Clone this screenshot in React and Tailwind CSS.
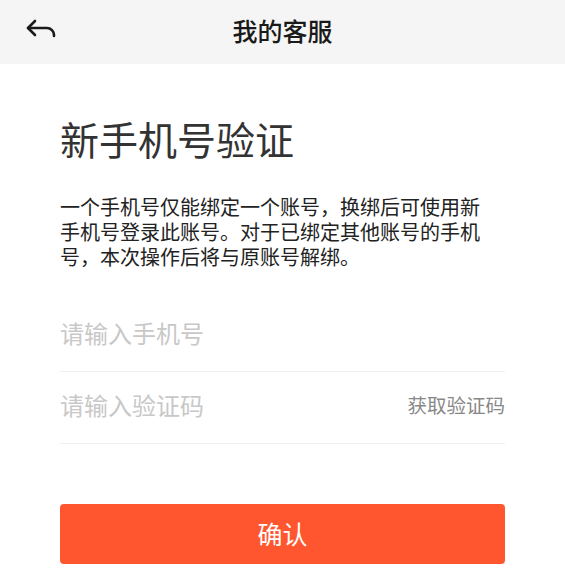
import React from "react";

const BackArrow = () => (
    <svg width="32" height="20" viewBox="0 0 32 20" fill="none" stroke="#1a1a1a" strokeWidth="2.6" strokeLinecap="round" strokeLinejoin="round">
        <path d="M9 2 L2 9 L9 16" />
        <path d="M2 9 H21 a7 7 0 0 1 7 7 V17" />
    </svg>
);

const App = () => {
    return (
        <div
            className="min-h-screen bg-white"
            style={{ fontFamily: '"Noto Sans CJK SC", "Noto Sans", sans-serif' }}
        >
            {/* header */}
            <div className="relative h-[64px] bg-[#f5f5f5] flex items-center justify-center">
                <button className="absolute left-[26px] top-[19px]">
                    <BackArrow />
                </button>
                <h1 className="-mt-[4px] text-[25px] font-medium text-[#1a1a1a] leading-none">我的客服</h1>
            </div>

            <div className="px-[60px]">
                <h2 className="mt-[55px] text-[39px] leading-none text-[#333333] font-normal">新手机号验证</h2>

                <p className="mt-[36px] w-[432px] text-[20px] leading-[25px] text-[#222222]">
                    一个手机号仅能绑定一个账号，换绑后可使用新手机号登录此账号。对于已绑定其他账号的手机号，本次操作后将与原账号解绑。
                </p>

                <div className="mt-[31px]">
                    <div className="h-[72px] pb-[6px] flex items-center border-b border-[#f0f0f0]">
                        <input
                            className="flex-1 outline-none text-[24px] text-[#333] placeholder:text-[#c8c8c8] bg-transparent"
                            placeholder="请输入手机号"
                        />
                    </div>
                    <div className="h-[72px] pb-[6px] flex items-center border-b border-[#f0f0f0]">
                        <input
                            className="flex-1 min-w-0 outline-none text-[24px] text-[#333] placeholder:text-[#c8c8c8] bg-transparent"
                            placeholder="请输入验证码"
                        />
                        <span className="text-[19.5px] text-[#888888]">获取验证码</span>
                    </div>
                </div>

                <button className="mt-[60px] w-full h-[60px] rounded-[4px] bg-[#ff5630] text-white text-[25px] flex items-center justify-center">
                    确认
                </button>
            </div>
        </div>
    );
};

export default App;
